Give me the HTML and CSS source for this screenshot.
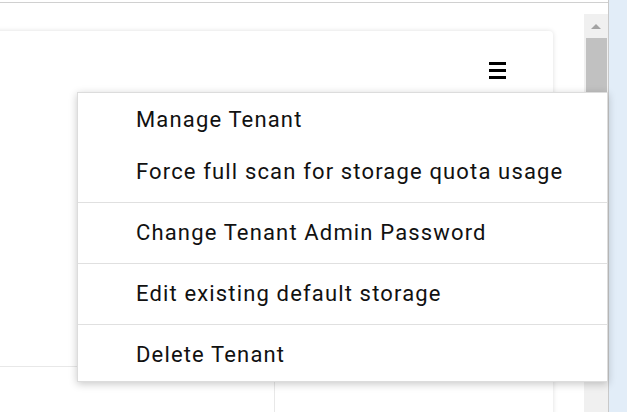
FILE: index.html
```html
<!DOCTYPE html>
<html lang="en">
<head>
    <meta charset="UTF-8">
    <meta name="viewport" content="width=device-width, initial-scale=1.0">
    <title>Tenants</title>
    <link rel="stylesheet" href="styles.css">
</head>
<body>
    <div class="window">
        <div class="main">
            <div class="topbar"></div>
            <div class="viewport">
                <div class="content">
                    <div class="card">
                        <div class="card-head">
                            <button class="menu-toggle" title="Actions">
                                <svg width="17" height="17" viewBox="0 0 17 17">
                                    <rect x="0" y="0" width="17" height="3" fill="#000"/>
                                    <rect x="0" y="7" width="17" height="3" fill="#000"/>
                                    <rect x="0" y="14" width="17" height="3" fill="#000"/>
                                </svg>
                            </button>
                        </div>
                        <div class="card-row">
                            <div class="cell cell-first"></div>
                            <div class="cell"></div>
                        </div>
                    </div>
                </div>
                <div class="scrollbar">
                    <div class="scroll-up"></div>
                    <div class="scroll-thumb"></div>
                </div>
            </div>

            <!-- actions dropdown -->
            <ul class="menu">
                <li class="menu-item">Manage Tenant</li>
                <li class="menu-item">Force full scan for storage quota usage</li>
                <li class="menu-divider"></li>
                <li class="menu-item">Change Tenant Admin Password</li>
                <li class="menu-divider"></li>
                <li class="menu-item">Edit existing default storage</li>
                <li class="menu-divider"></li>
                <li class="menu-item">Delete Tenant</li>
            </ul>
        </div>
        <div class="side"></div>
    </div>
</body>
</html>
```

FILE: styles.css
```css
html, body {
    margin: 0;
    height: 100%;
    overflow: hidden;
}

body {
    font-family: Roboto, "Liberation Sans", Arial, sans-serif;
    background: #fff;
    color: #111;
}

.window {
    display: flex;
    height: 412px;
}

.main {
    position: relative;
    width: 608px;
    border-right: 1px solid #c9c9c9;
    display: flex;
    flex-direction: column;
}

.side {
    flex: 1;
    background: #e2edf8;
}

.topbar {
    height: 2px;
    border-bottom: 1px solid #d0d0d0;
}

.viewport {
    flex: 1;
    display: flex;
    margin-top: 11px;
    min-height: 0;
}

.content {
    flex: 1;
    padding-top: 17px;
    overflow: hidden;
}

.card {
    margin-left: -10px;
    margin-right: 31px;
    background: #fff;
    border-radius: 4px;
    box-shadow: 0 0 5px rgba(0, 0, 0, 0.13);
}

.card-head {
    height: 336px;
    display: flex;
    justify-content: flex-end;
    align-items: flex-start;
    padding: 31px 47px 0 0;
    box-sizing: border-box;
    border-bottom: 1px solid #e8e8e8;
}

.menu-toggle {
    border: none;
    background: none;
    padding: 0;
    margin: 0;
    width: 17px;
    height: 17px;
    cursor: pointer;
    display: block;
}

.menu-toggle svg {
    display: block;
}

.card-row {
    display: flex;
    height: 80px;
}

.cell {
    flex: 1;
}

.cell-first {
    flex: none;
    width: 284px;
    border-right: 1px solid #e8e8e8;
}

.scrollbar {
    width: 24px;
    background: #f0f0f0;
    display: flex;
    flex-direction: column;
    align-items: center;
}

.scroll-up {
    width: 0;
    height: 0;
    margin: 10px 0 9px;
    border-left: 5px solid transparent;
    border-right: 5px solid transparent;
    border-bottom: 5px solid #a3a3a3;
}

.scroll-thumb {
    width: 21px;
    height: 120px;
    background: #c1c1c1;
}

.menu {
    position: absolute;
    left: 77px;
    top: 92px;
    width: 529px;
    margin: 0;
    padding: 1px 0 0;
    list-style: none;
    background: #fff;
    border: 1px solid #dcdcdc;
    box-shadow: 0 2px 8px rgba(0, 0, 0, 0.22);
}

.menu-item {
    height: 52px;
    line-height: 52px;
    padding-left: 58px;
    font-size: 22px;
    letter-spacing: 1.15px;
    color: #111;
    white-space: nowrap;
    cursor: pointer;
}

.menu-divider {
    height: 1px;
    margin: 4px 0;
    background: #e0e0e0;
}
```
